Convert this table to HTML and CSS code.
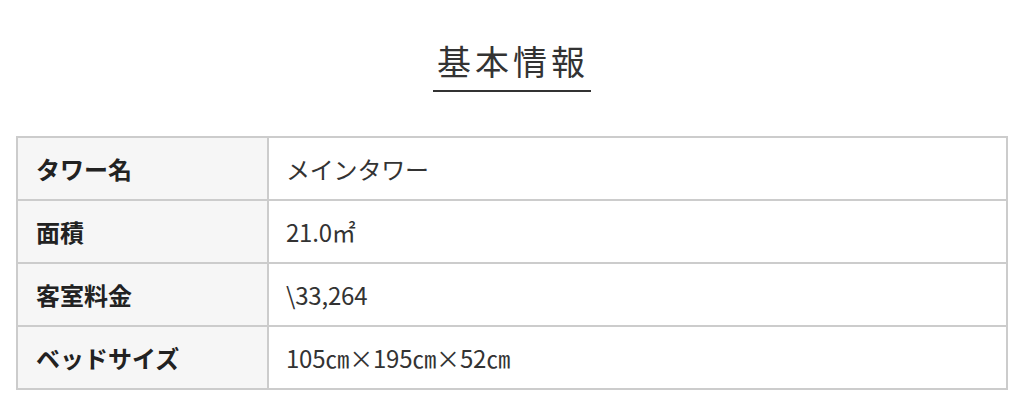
FILE: index.html
```html
<!DOCTYPE html>
<html lang="ja">
<head>
<meta charset="utf-8">
<link rel="stylesheet" href="styles.css">
</head>
<body>
<section class="info">
  <div class="title-wrap"><h2 class="title">基本情報</h2></div>
  <table class="spec">
    <tr><th>タワー名</th><td>メインタワー</td></tr>
    <tr><th>面積</th><td>21.0㎡</td></tr>
    <tr><th>客室料金</th><td>\33,264</td></tr>
    <tr><th>ベッドサイズ</th><td>105㎝×195㎝×52㎝</td></tr>
  </table>
</section>
</body>
</html>
```
FILE: styles.css
```css
html, body {
  margin: 0;
  padding: 0;
  background: #fff;
}
body {
  font-family: "Noto Sans CJK JP", "Noto Sans", sans-serif;
  color: #333;
}
.info {
  padding: 37px 16px 0;
}
.title-wrap {
  text-align: center;
}
.title {
  display: inline-block;
  margin: 0;
  font-size: 34px;
  font-weight: 400;
  letter-spacing: 4px;
  line-height: 48px;
  padding: 0 2px 5px 4px;
  border-bottom: 2px solid #333;
}
.spec {
  width: 100%;
  margin-top: 44px;
  border-collapse: collapse;
  border: 2px solid #ccc;
}
.spec th,
.spec td {
  border: 2px solid #ccc;
  height: 61px;
  padding: 0 18px;
  font-size: 24px;
  letter-spacing: 0;
  text-align: left;
  vertical-align: middle;
}
.spec th {
  width: 213px;
  background: #f6f6f6;
  font-weight: 700;
  color: #222;
}
.spec td {
  padding-left: 17px;
  font-weight: 400;
  letter-spacing: -0.2px;
}
```
